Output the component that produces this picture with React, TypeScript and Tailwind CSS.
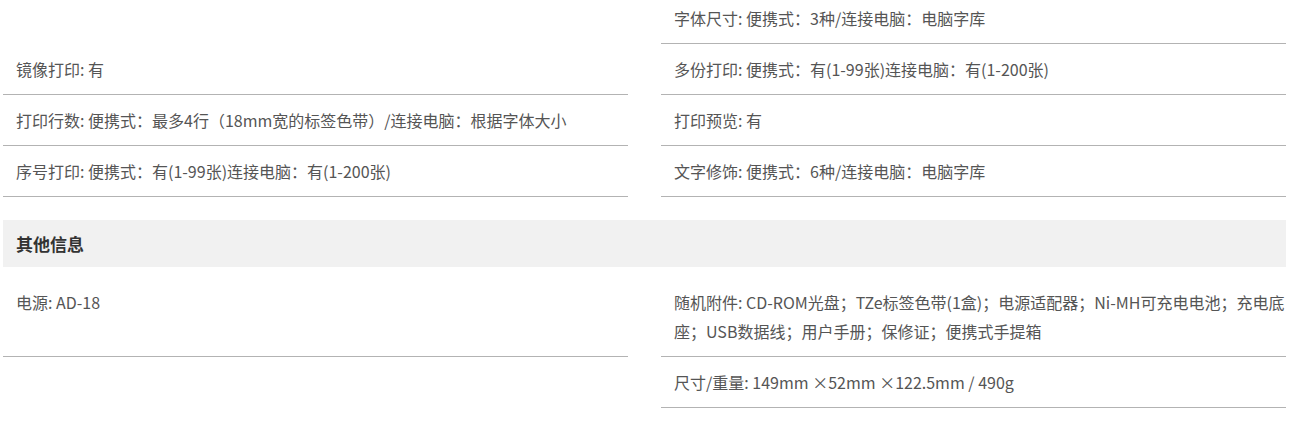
import React from 'react';

type Cell = string | null;

const topRows: [Cell, Cell][] = [
  [null, '字体尺寸: 便携式：3种/连接电脑：电脑字库'],
  ['镜像打印: 有', '多份打印: 便携式：有(1-99张)连接电脑：有(1-200张)'],
  ['打印行数: 便携式：最多4行（18mm宽的标签色带）/连接电脑：根据字体大小', '打印预览: 有'],
  ['序号打印: 便携式：有(1-99张)连接电脑：有(1-200张)', '文字修饰: 便携式：6种/连接电脑：电脑字库'],
];

const otherRows: [Cell, Cell][] = [
  [
    '电源: AD-18',
    '随机附件: CD-ROM光盘；TZe标签色带(1盒)；电源适配器；Ni-MH可充电电池；充电底座；USB数据线；用户手册；保修证；便携式手提箱',
  ],
  [null, '尺寸/重量: 149mm ×52mm ×122.5mm / 490g'],
];

const SpecCell: React.FC<{ text: Cell }> = ({ text }) => {
  if (text === null) return <div />;
  return (
    <div className="border-b border-[#b3b3b3] pl-[13px] pt-[11px] pb-[10px] leading-[29px]">
      {text}
    </div>
  );
};

export default function App() {
  return (
    <div className="w-[1312px] h-[431px] overflow-hidden bg-white font-['Noto_Sans_CJK_SC','Noto_Sans',sans-serif] text-[16px] text-[#555]">
      <div className="ml-[3px] w-[1283px] -mt-[7px]">
        <div className="grid grid-cols-2 gap-x-[33px]">
          {topRows.map(([l, r], i) => (
            <React.Fragment key={i}>
              <SpecCell text={l} />
              <SpecCell text={r} />
            </React.Fragment>
          ))}
        </div>

        <div className="mt-[23px] h-[47px] bg-[#f1f1f1] pl-[13px] flex items-center text-[17px] font-bold text-[#333]">
          其他信息
        </div>

        <div className="mt-[10px] grid grid-cols-2 gap-x-[33px]">
          {otherRows.map(([l, r], i) => (
            <React.Fragment key={i}>
              <SpecCell text={l} />
              <SpecCell text={r} />
            </React.Fragment>
          ))}
        </div>
      </div>
    </div>
  );
}
